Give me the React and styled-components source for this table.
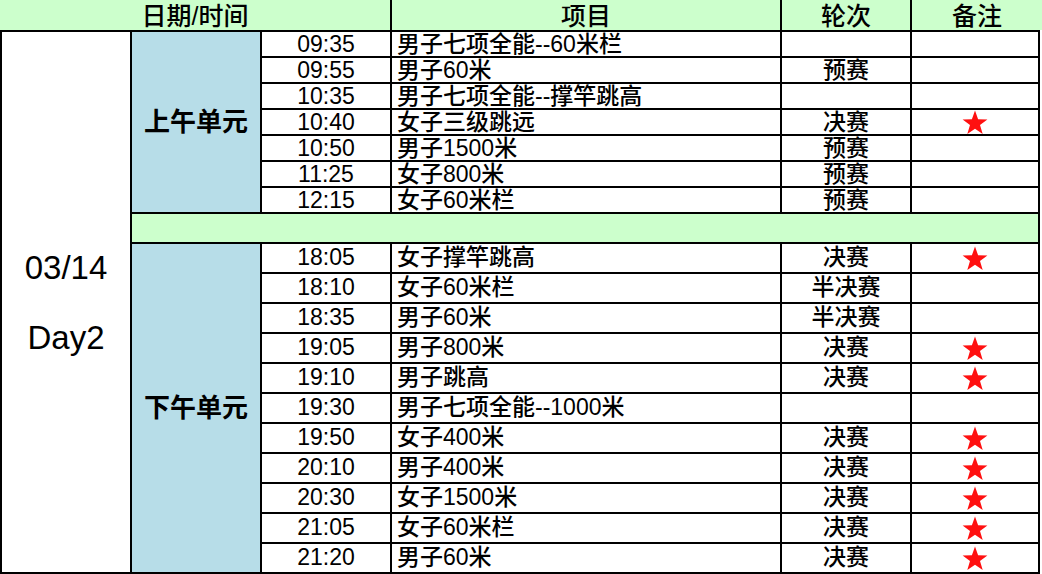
import React from "react";
import styled, { createGlobalStyle } from "styled-components";

const Global = createGlobalStyle`
  html, body { margin: 0; padding: 0; background: #fff; }
  body { font-family: "Liberation Sans", "Noto Sans CJK SC", sans-serif; color: #000; }
`;

const FONT = `"Liberation Sans", "Noto Sans CJK SC", sans-serif`;

const Sheet = styled.div`
  display: grid;
  width: 1040px;
  height: 574px;
  box-sizing: border-box;
  background: #000;
  padding: 0 2px 2px 2px;
  gap: 2px;
  grid-template-columns: 128px 128px 128px 388px 128px 126px;
  grid-template-rows: 30px repeat(7, 24px) 28px repeat(11, 28px);
  font-family: ${FONT};
`;

const HeadCell = styled.div`
  grid-column: ${(p) => p.$col};
  background: #ccffcc;
  display: flex;
  align-items: center;
  justify-content: center;
  padding-top: 3px;
  font-size: 25px;
  font-weight: 500;
  line-height: 25px;
  margin-left: ${(p) => (p.$first ? "-2px" : "0")};
  margin-right: ${(p) => (p.$last ? "-4px" : "0")};
`;

const DateCell = styled.div`
  grid-column: 1;
  grid-row: 2 / span 19;
  background: #fff;
  display: flex;
  flex-direction: column;
  align-items: center;
  justify-content: center;
  gap: 37px;
  font-size: 33px;
  line-height: 33px;
`;

const UnitCell = styled.div`
  grid-column: 2;
  grid-row: span ${(p) => p.$span};
  background: #b7dde8;
  display: flex;
  align-items: center;
  justify-content: center;
  font-size: 26px;
  font-weight: 700;
  line-height: 28px;
`;

const Band = styled.div`
  grid-column: 2 / span 5;
  background: #ccffcc;
`;

const Cell = styled.div`
  grid-column: ${(p) => p.$col};
  background: #fff;
  display: flex;
  align-items: center;
  justify-content: ${(p) => (p.$left ? "flex-start" : "center")};
  padding-left: ${(p) => (p.$left ? "5px" : "0")};
  font-size: 23px;
  font-weight: 500;
  line-height: 24px;
  white-space: nowrap;
  overflow: visible;
  padding-bottom: ${(p) => (p.$tall ? "3px" : "0")};
`;

const StarIcon = () => (
  <svg width="26" height="25" viewBox="0 0 26 25" aria-hidden="true">
    <polygon
      points="13,0.5 16.1,9.3 25.4,9.5 18,15.1 20.7,24 13,18.7 5.3,24 8,15.1 0.6,9.5 9.9,9.3"
      fill="#ff1010"
    />
  </svg>
);

const morning = [
  ["09:35", "男子七项全能--60米栏", "", false],
  ["09:55", "男子60米", "预赛", false],
  ["10:35", "男子七项全能--撑竿跳高", "", false],
  ["10:40", "女子三级跳远", "决赛", true],
  ["10:50", "男子1500米", "预赛", false],
  ["11:25", "女子800米", "预赛", false],
  ["12:15", "女子60米栏", "预赛", false],
];

const afternoon = [
  ["18:05", "女子撑竿跳高", "决赛", true],
  ["18:10", "女子60米栏", "半决赛", false],
  ["18:35", "男子60米", "半决赛", false],
  ["19:05", "男子800米", "决赛", true],
  ["19:10", "男子跳高", "决赛", true],
  ["19:30", "男子七项全能--1000米", "", false],
  ["19:50", "女子400米", "决赛", true],
  ["20:10", "男子400米", "决赛", true],
  ["20:30", "女子1500米", "决赛", true],
  ["21:05", "女子60米栏", "决赛", true],
  ["21:20", "男子60米", "决赛", true],
];

const Rows = ({ data, tall }) =>
  data.map(([time, event, round, star]) => (
    <React.Fragment key={time}>
      <Cell $col={3} $tall={tall}>{time}</Cell>
      <Cell $col={4} $left $tall={tall}>{event}</Cell>
      <Cell $col={5} $tall={tall}>{round}</Cell>
      <Cell $col={6}>{star ? <StarIcon /> : null}</Cell>
    </React.Fragment>
  ));

export default function App() {
  return (
    <>
      <Global />
      <Sheet>
        <HeadCell $col="1 / span 3" $first>日期/时间</HeadCell>
        <HeadCell $col={4}>项目</HeadCell>
        <HeadCell $col={5}>轮次</HeadCell>
        <HeadCell $col={6} $last>备注</HeadCell>
        <DateCell>
          <span>03/14</span>
          <span>Day2</span>
        </DateCell>
        <UnitCell $span={7}>上午单元</UnitCell>
        <Rows data={morning} />
        <Band />
        <UnitCell $span={11}>下午单元</UnitCell>
        <Rows data={afternoon} tall />
      </Sheet>
    </>
  );
}
